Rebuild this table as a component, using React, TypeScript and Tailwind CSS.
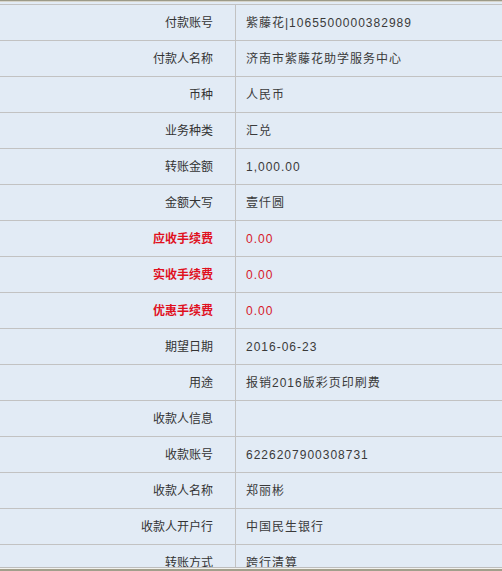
import React from "react";

type Row = { label: string; value: string; red?: boolean };

const rows: Row[] = [
  { label: "付款账号", value: "紫藤花|1065500000382989" },
  { label: "付款人名称", value: "济南市紫藤花助学服务中心" },
  { label: "币种", value: "人民币" },
  { label: "业务种类", value: "汇兑" },
  { label: "转账金额", value: "1,000.00" },
  { label: "金额大写", value: "壹仟圆" },
  { label: "应收手续费", value: "0.00", red: true },
  { label: "实收手续费", value: "0.00", red: true },
  { label: "优惠手续费", value: "0.00", red: true },
  { label: "期望日期", value: "2016-06-23" },
  { label: "用途", value: "报销2016版彩页印刷费" },
  { label: "收款人信息", value: "" },
  { label: "收款账号", value: "6226207900308731" },
  { label: "收款人名称", value: "郑丽彬" },
  { label: "收款人开户行", value: "中国民生银行" },
  { label: "转账方式", value: "跨行清算" },
];

export default function App() {
  return (
    <div
      className="w-[502px] h-[571px] flex flex-col bg-[#e2ebf5] overflow-hidden"
      style={{ fontFamily: '"Liberation Sans", "Noto Sans CJK SC", sans-serif' }}
    >
      <div className="h-px shrink-0 bg-[#9c9a88]" />
      <div className="h-px shrink-0 bg-[#d6d4ca]" />
      <div className="flex-1 min-h-0 overflow-hidden pt-[2px]">
        <div className="border-t border-[#c2c2c2]">
          {rows.map((r, i) => (
            <div key={i} className="flex h-[36px] border-b border-[#c2c2c2]">
              <div
                className={
                  "w-[236px] shrink-0 border-r border-[#c2c2c2] flex items-center justify-end pr-[22px] text-[12px] " +
                  (r.red ? "text-[#e0101e] font-bold" : "text-[#333333]")
                }
              >
                {r.label}
              </div>
              <div
                className={
                  "flex-1 flex items-center pl-[10px] text-[12px] tracking-[1px] " +
                  (r.red ? "text-[#d6182a]" : "text-[#3a3a3a]")
                }
              >
                {r.value}
              </div>
            </div>
          ))}
        </div>
      </div>
      <div className="h-px shrink-0 bg-[#bdbdbd]" />
      <div className="h-px shrink-0 bg-[#f2f2ee]" />
      <div className="h-[2px] shrink-0 bg-[#a29f8c]" />
    </div>
  );
}
